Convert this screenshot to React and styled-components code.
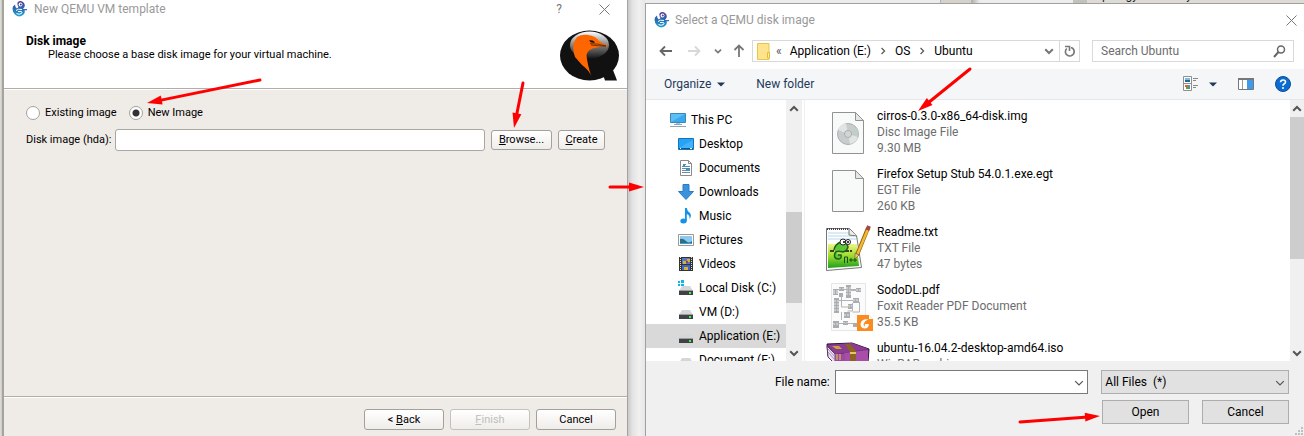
import React from "react";
import styled, { createGlobalStyle, css } from "styled-components";

const Global = createGlobalStyle`
  *, *::before, *::after { box-sizing: border-box; }
  html, body { margin: 0; padding: 0; }
  body { background: #efefef; color: #000; font-family: Roboto, "Open Sans", sans-serif; font-size: 12px; line-height: 16px; }
  button, input, select { font: inherit; color: inherit; margin: 0; }
  svg { display: block; flex: none; }
`;

const Desktop = styled.main`
  position: relative;
  display: grid;
  grid-template-columns: 4px minmax(0, 624fr) 17px minmax(0, 659fr);
  height: 100vh;
  overflow: hidden;
`;
const LeftEdge = styled.div`
  background: linear-gradient(90deg, #dedbd6 0 1px, #cfcdc8 1px 2px, #a5a49e 2px 4px);
`;
const Gap = styled.div`
  background: linear-gradient(90deg, #c9c9c9, #e2e2e2 25%, #f1f1f1 65%, #e6e6e6);
`;

/* ---------- wizard ---------- */
const Wizard = styled.section`
  display: flex;
  flex-direction: column;
  min-width: 0;
  background: #efebe6;
  border-right: 1px solid #a3a3a3;
  font-size: 11px;
`;
const WizardHead = styled.header`
  height: 90px;
  background: #fff;
  border-bottom: 1px solid #fff;
  box-shadow: inset 0 -1px #b0adaa;
`;
const TitleBar = styled.div`
  display: flex;
  align-items: center;
  gap: ${(p) => p.$gap}px;
  height: ${(p) => p.$height}px;
  padding: 0 ${(p) => p.$right}px 0 8px;
  font-size: 12px;
  color: #999;
`;
const Caption = styled.h1`
  flex: 1;
  margin: 0;
  font: inherit;
  white-space: nowrap;
`;
const IconButton = styled.button`
  display: grid;
  place-items: center;
  flex: none;
  width: ${(p) => p.$w || 16}px;
  height: 16px;
  padding: 0;
  border: 0;
  background: none;
  color: ${(p) => p.$color || "#777"};
`;
const HeadBody = styled.div`
  display: flex;
  justify-content: space-between;
  padding: 12px 7px 0 22px;
`;
const HeadTitle = styled.h2`
  margin: 4px 0 0;
  font-size: 12px;
  line-height: 14px;
`;
const HeadText = styled.p`
  margin: 0 0 0 22px;
  line-height: 14px;
`;
const WizardBody = styled.form`
  flex: 1;
  padding: 15px 22px 0;
`;
const RadioRow = styled.div`
  display: flex;
  gap: 12px;
  height: 16px;
`;
const RadioLabel = styled.label`
  display: flex;
  align-items: center;
  gap: 5px;
  white-space: nowrap;
`;
const Radio = styled.input`
  appearance: none;
  width: 14px;
  height: 14px;
  margin: 0;
  border: 1px solid #a5a29f;
  border-radius: 50%;
  background: #fff;
  &:checked { background: radial-gradient(circle, #333 0 3px, #fff 4px); }
`;
const FieldRow = styled.div`
  display: flex;
  align-items: center;
  gap: 6px;
  margin-top: 8px;
`;
const FieldLabel = styled.label`
  width: 83px;
  white-space: nowrap;
`;
const PathInput = styled.input`
  flex: 1;
  min-width: 0;
  height: 22px;
  border: 1px solid #a9a6a3;
  border-radius: 3px;
  background: #fff;
`;
const PushButton = styled.button`
  width: ${(p) => p.$width}px;
  height: ${(p) => p.$height || 20}px;
  padding: 0;
  border: 1px solid #a3a09d;
  border-radius: 3px;
  background: linear-gradient(#fff, #efedea);
  white-space: nowrap;
  &:disabled { color: #c0bdba; border-color: #c4c1be; }
`;
const WizardFoot = styled.footer`
  display: flex;
  justify-content: flex-end;
  gap: 6px;
  height: 40px;
  padding: 12px 11px 0;
  border-top: 1px solid #b0adaa;
  box-shadow: inset 0 1px #fff;
`;

/* ---------- file dialog ---------- */
const RightColumn = styled.div`
  display: flex;
  flex-direction: column;
  min-width: 0;
  min-height: 0;
`;
const BackWindow = styled.div`
  display: flex;
  align-items: flex-end;
  height: 3px;
  overflow: hidden;
  padding-right: 112px;
  justify-content: flex-end;
  background: linear-gradient(90deg, #ececec 0 295px, #b5b3af 295px 296px, #d5d2cc 296px 326px, #b5b3af 326px 327px, #ededed 335px 428px, #c3c1bd 428px 442px, #dedbd6 442px);
`;
const BackTitle = styled.span`
  line-height: 16px;
  color: #222;
`;
const Dialog = styled.section`
  flex: 1;
  display: flex;
  flex-direction: column;
  min-height: 0;
  border: solid #a0a0a0;
  border-width: 1px 0 0 1px;
  background: #fff;
`;
const NavRow = styled.nav`
  display: grid;
  grid-template-columns: 94px minmax(0, 328fr) minmax(0, 214fr);
  align-items: center;
  height: 22px;
  margin-top: 4px;
  padding: 0 10px 0 12px;
`;
const Arrows = styled.div`
  display: flex;
  gap: 8px;
  align-items: center;
`;
const AddressBar = styled.div`
  display: flex;
  align-items: center;
  height: 22px;
  border: 1px solid #d9d9d9;
  padding-left: 4px;
  min-width: 0;
`;
const Crumbs = styled.div`
  flex: 1;
  display: flex;
  align-items: center;
  gap: 8px;
  min-width: 0;
  padding-left: 6px;
  color: #555;
  white-space: nowrap;
`;
const Crumb = styled.a`
  color: #000;
  text-decoration: none;
`;
const RefreshCell = styled.div`
  display: grid;
  place-items: center;
  width: 20px;
  height: 20px;
  border-left: 1px solid #d9d9d9;
`;
const SearchBox = styled.label`
  display: flex;
  align-items: center;
  height: 22px;
  margin-left: 12px;
  padding: 0 7px 0 8px;
  border: 1px solid #d9d9d9;
  min-width: 0;
`;
const SearchInput = styled.input`
  flex: 1;
  min-width: 0;
  padding: 0;
  border: 0;
  outline: 0;
  background: none;
  &::placeholder { color: #6d6d6d; opacity: 1; }
`;
const Toolbar = styled.div`
  display: flex;
  align-items: center;
  height: 31px;
  margin-top: 7px;
  padding: 0 13px 0 18px;
  background: #f5f6f7;
  border-bottom: 1px solid #e6e7e8;
  color: #1e395b;
`;
const ToolButton = styled.button`
  display: flex;
  align-items: center;
  gap: 6px;
  height: 20px;
  padding: 0;
  border: 0;
  background: none;
  white-space: nowrap;
`;
const ToolGroup = styled.div`
  display: flex;
  align-items: center;
  margin-left: ${(p) => p.$left};
  gap: ${(p) => p.$gap || 0}px;
`;
const Panes = styled.div`
  flex: 1;
  display: flex;
  min-height: 0;
`;
const Tree = styled.ul`
  width: 140px;
  margin: 0;
  padding: 8px 0 0;
  list-style: none;
  overflow: hidden;
`;
const TreeItem = styled.li`
  display: flex;
  align-items: center;
  gap: 5px;
  height: 24px;
  padding-left: ${(p) => (p.$root ? 24 : 32)}px;
  white-space: nowrap;
  ${(p) => p.$selected && css`background: #d9d9d9;`}
`;
const ScrollBar = styled.div`
  display: flex;
  flex-direction: column;
  align-items: center;
  width: ${(p) => p.$width}px;
  background: #f0f0f0;
  color: #555;
`;
const ScrollEnd = styled.button`
  display: grid;
  place-items: center;
  width: 100%;
  height: 17px;
  padding: 0;
  border: 0;
  background: none;
`;
const ScrollTrack = styled.div`
  flex: 1;
  width: 100%;
  display: flex;
  flex-direction: column;
`;
const ScrollSpace = styled.div`
  flex: ${(p) => p.$size};
`;
const ScrollThumb = styled.div`
  flex: ${(p) => p.$size};
  background: #cdcdcd;
`;
const FileList = styled.ul`
  flex: 1;
  margin: 0 0 0 2px;
  padding: 8px 0 0 19px;
  border-left: 1px solid #f0f0f0;
  list-style: none;
  overflow: hidden;
`;
const FileItem = styled.li`
  display: flex;
  gap: 5px;
  height: 58px;
`;
const FileIcon = styled.div`
  width: 48px;
  height: 50px;
  flex: none;
`;
const FileText = styled.div`
  display: flex;
  flex-direction: column;
  color: #6d6d6d;
  white-space: nowrap;
`;
const FileName = styled.span`
  color: #000;
`;
const DialogFoot = styled.footer`
  display: flex;
  flex-direction: column;
  gap: 6px;
  height: 75px;
  padding: 9px 15px 0 0;
  background: #f0f0f0;
`;
const FieldsRow = styled.div`
  display: grid;
  grid-template-columns: minmax(0, 189fr) minmax(0, 254fr) 13px minmax(0, 188fr);
  align-items: center;
`;
const ButtonsRow = styled.div`
  display: flex;
  justify-content: flex-end;
`;
const NameLabel = styled.label`
  padding-right: 5px;
  text-align: right;
  white-space: nowrap;
`;
const Combo = styled.div`
  position: relative;
  grid-column: ${(p) => p.$column};
`;
const ComboArrow = styled.span`
  position: absolute;
  right: 4px;
  top: 8px;
  color: #555;
  pointer-events: none;
`;
const NameInput = styled.input`
  display: block;
  width: 100%;
  height: 24px;
  border: 1px solid #7a7a7a;
  background: #fff;
`;
const TypeSelect = styled.select`
  display: block;
  appearance: none;
  width: 100%;
  height: 24px;
  padding: 0 3px;
  border: 1px solid #adadad;
  border-radius: 0;
  background: #e1e1e1;
`;
const FlatButton = styled.button`
  width: 87px;
  height: 24px;
  margin-left: 13px;
  padding: 0;
  border: 1px solid #adadad;
  background: #e1e1e1;
`;
const Grip = styled.svg`
  position: absolute;
  right: 0;
  bottom: 0;
`;
const Annotations = styled.svg`
  position: absolute;
  left: 0;
  top: 0;
  pointer-events: none;
`;

/* ---------- drawings ---------- */
const AppIcon = () => (
  <svg width="16" height="16" viewBox="0 0 16 16" aria-hidden="true">
    <defs>
      <linearGradient id="cham" x1="0" y1="0" x2="0" y2="1">
        <stop offset="0" stopColor="#5a3a93" /><stop offset=".5" stopColor="#2a6db5" /><stop offset="1" stopColor="#21a3d0" />
      </linearGradient>
    </defs>
    <path d="M5.500 1.500Q8-1 11 1Q13.500 3 12.500 6L11 8H15V9.200H12.500Q13.500 12 11 14Q7 17 3 13.500Q-.5 10 1 5.500L3 3.500L3.500 6L5 7.500L6.500 6Q5 4 5.500 1.500Z" fill="url(#cham)" />
    <circle cx="8.500" cy="3.500" r="1.900" fill="#fff" /><circle cx="8.800" cy="3.500" r="1" fill="#4a4593" />
    <path d="M4 9.500Q6 7.500 10 8.500M4.500 12.500Q7 14 9.500 12.500Q11 11 9 10.500H6" fill="none" stroke="#fff" />
  </svg>
);
const Cross = () => (
  <svg width="11" height="11" viewBox="0 0 11 11"><path d="M.5.5l10 10M10.5.5l-10 10" stroke="currentColor" fill="none" /></svg>
);
const Chevron = ({ dir = "down", size = 10, weight = 1.5 }) => {
  const rot = { down: 0, up: 180, right: -90 }[dir];
  return (
    <svg width={size} height={size} viewBox="0 0 10 10">
      <path d="M1.2 3.2L5 7l3.800-3.800" transform={`rotate(${rot} 5 5)`} fill="none" stroke="currentColor" strokeWidth={weight} />
    </svg>
  );
};
const Triangle = () => (
  <svg width="8" height="5" viewBox="0 0 8 5"><path d="M0 .5h8L4 4.500z" fill="#1e395b" /></svg>
);
const Arrow = ({ rot = 0, color }) => (
  <svg width="14" height="14" viewBox="0 0 14 14">
    <path d="M13 7H2M6 2.500L1.500 7L6 11.500" transform={`rotate(${rot} 7 7)`} fill="none" stroke={color} strokeWidth="1.800" />
  </svg>
);
const QemuLogo = () => (
  <svg width="60" height="52" viewBox="0 0 60 52" role="img" aria-label="QEMU">
    <defs>
      <linearGradient id="shine" x1="0" y1="0" x2="0" y2="1">
        <stop offset="0" stopColor="#fff" /><stop offset=".55" stopColor="#777" /><stop offset="1" stopColor="#161616" />
      </linearGradient>
    </defs>
    <ellipse cx="29.500" cy="25.500" rx="29.500" ry="25" fill="#111" />
    <path d="M42 42l11-2 4 10.500H45z" fill="#111" />
    <ellipse cx="29.500" cy="15" rx="19.500" ry="13.500" fill="url(#shine)" />
    <path d="M17 7Q22 4 28 5Q36 6 39 11L47 15.500V17Q42 16 37 17.500Q27 19 26.500 25Q27 33 31.500 47Q30 41 22 35L15 27Q12 19 14 12Z" fill="#ff6600" />
    <path d="M29 10.500q4-1 6 2q-4 1-6-2z" fill="#111" /><path d="M30 13.600Q38 13.500 46 16M31 15q8 1 15 1.200" fill="none" stroke="#111" strokeWidth=".6" />
  </svg>
);
const FolderIcon = () => (
  <svg width="13" height="17" viewBox="0 0 13 17"><path d="M.5.5H12v16H.5z" fill="#ffe38d" stroke="#e9c54d" /><path d="M10.500 9.500H12.500V15H10.500z" fill="#ffe9a6" stroke="#e9b93a" /></svg>
);
const Refresh = () => (
  <svg width="12" height="12" viewBox="0 0 12 12"><path d="M2.800 3.500Q.5 6 2 9Q4 11.500 7 10.800Q10.500 9.500 10.200 6Q9.500 3 7 2.500" fill="none" stroke="#777" strokeWidth="1.600" /><path d="M1 1.500H5.500V6" fill="none" stroke="#777" strokeWidth="1.600" /></svg>
);
const Search = () => (
  <svg width="13" height="13" viewBox="0 0 13 13"><circle cx="8" cy="4.500" r="3.500" fill="none" stroke="#666" strokeWidth="1.500" /><path d="M5.500 7L1 12" stroke="#666" strokeWidth="2" /></svg>
);
const ViewIcon = () => (
  <svg width="16" height="16" viewBox="0 0 16 16">
    <path d="M.5.5h8v7h-8zM.5 7.500h8v7h-8z" fill="#fff" stroke="#8f8f8f" />
    <path d="M2 2h5v2H2z" fill="#7db9ec" /><path d="M2 4h5v2H2z" fill="#216b8e" />
    <path d="M2 9h3v2H2z" fill="#e25c35" /><path d="M5 9h2v2H5z" fill="#4e8ee0" /><path d="M3 11h4v2H3z" fill="#54a344" />
    <path d="M10 2.500h5M10 4.500h3M10 9.500h5M10 11.500h3" stroke="#888" />
  </svg>
);
const PaneIcon = () => (
  <svg width="16" height="12" viewBox="0 0 16 12"><path d="M.5.5h15v11H.5z" fill="#fff" stroke="#777" /><path d="M0 0h16v2H0z" fill="#777" /><path d="M4.500 2v9" stroke="#999" /><path d="M9 2h6v9H9z" fill="#3f9be8" /></svg>
);
const HelpIcon = () => (
  <svg width="16" height="16" viewBox="0 0 16 16"><circle cx="8" cy="8" r="7.500" fill="#0a6cd0" stroke="#0b4f96" /><path d="M5.500 6.300Q5.700 4 8 4Q10.500 4 10.500 6Q10.500 7.200 9 8Q8 8.600 8 9.700" fill="none" stroke="#fff" strokeWidth="1.600" /><circle cx="8" cy="12" r="1" fill="#fff" /></svg>
);

const Drive = ({ windows }) => (
  <svg width="16" height="16" viewBox="0 0 16 16">
    <path d="M4 6h8l3 5H1z" fill="#d4d6d7" /><path d="M1 11h14v4H1z" fill="#3f4345" /><path d="M1 10h14v1H1z" fill="#9b9d9e" /><path d="M11 12h2v2h-2z" fill="#43f04c" />
    {windows && <path d="M0 1h2v2H0zM3 0h3v3H3zM0 4h2v2H0zM3 4h3v2H3z" fill="#12b5ea" />}
  </svg>
);
const treeIcons = {
  pc: <svg width="16" height="16" viewBox="0 0 16 16"><path d="M.5 1.500h15v9H.5z" fill="#5cc0f7" stroke="#3b87b5" /><path d="M1 10L15 2v8z" fill="#38a9ee" /><path d="M6 11h4v1H6z" fill="#a9c3d4" /><path d="M4 12.500h8M0 14.500h16" stroke="#8ca5b5" /></svg>,
  desktop: <svg width="16" height="16" viewBox="0 0 16 16"><path d="M.5 2.500h15v11H.5z" fill="#27a3f5" stroke="#1573bc" /><path d="M1 12L15 4v8z" fill="#45b1f8" /><path d="M1 12.500h14" stroke="#0b568f" /><path d="M2 12.500h1M12 12.500h2" stroke="#fff" /></svg>,
  documents: <svg width="16" height="16" viewBox="0 0 16 16"><path d="M2.500.5h8l3 3v12h-11z" fill="#fff" stroke="#8a8a8a" /><path d="M10.500.5v3h3" fill="none" stroke="#8a8a8a" /><path d="M5 4.500h3M4 6.500h8M4 8.500h8M4 10.500h8M4 12.500h8" stroke="#6b8ba3" /><path d="M5 4h2v3H5zM8 8h4v2H8z" fill="#2f93cf" /></svg>,
  downloads: <svg width="16" height="16" viewBox="0 0 16 16"><path d="M5 .5h6v7h4.500L8 15.500.5 7.500H5z" fill="#3a92dd" stroke="#2c7cc3" /></svg>,
  music: <svg width="16" height="16" viewBox="0 0 16 16"><ellipse cx="5.500" cy="13" rx="3.200" ry="2.500" fill="#1193ea" /><path d="M7 0h1.800Q9 3 12 5Q14 8 11.500 11Q12 7 8.800 6V13H7z" fill="#1193ea" /></svg>,
  pictures: <svg width="16" height="16" viewBox="0 0 16 16"><path d="M.5 2.500h15v11H.5z" fill="#fff" stroke="#999" /><path d="M2 4h12v8H2z" fill="#8cc9f2" /><path d="M2 7q3-1 6 2t6 0v3H2z" fill="#2e6f7c" /><path d="M2 11h12v1H2z" fill="#3c9ad9" /></svg>,
  videos: <svg width="16" height="16" viewBox="0 0 16 16"><path d="M1 1h14v14H1z" fill="#333" /><path d="M4 2h8v6H4z" fill="#5577c9" /><path d="M4 9h8v5H4z" fill="#3c66c9" /><path d="M5 5h3v3H5zM9 3h3v3H9zM6 11h4v3H6z" fill="#d9b32c" /><path d="M8 5h2v2H8z" fill="#a63a3a" /><path d="M2.500 1v14M13.500 1v14" stroke="#ddd" strokeDasharray="1 1" /></svg>,
  system: <Drive windows />,
  drive: <Drive />,
};
const treeRows = [
  ["This PC", "pc"], ["Desktop", "desktop"], ["Documents", "documents"], ["Downloads", "downloads"], ["Music", "music"],
  ["Pictures", "pictures"], ["Videos", "videos"], ["Local Disk (C:)", "system"], ["VM (D:)", "drive"], ["Application (E:)", "drive"], ["Document (F:)", "drive"],
];

const Sheet = () => (
  <>
    <path d="M8.500 4.500h23l8 8v33h-31z" fill="#f8f9f9" stroke="#929292" />
    <path d="M31.500 4.500v8h8z" fill="#e4e7e7" stroke="#929292" />
  </>
);
const fileIcons = {
  disc: <svg width="48" height="50" viewBox="0 0 48 50"><Sheet /><circle cx="24" cy="26" r="10.500" fill="#c9cccc" stroke="#abafaf" /><path d="M24 26L14 22Q16 16 22 15.500zM24 26l10 3q-2 6-8 7z" fill="#e0e4e2" /><path d="M24 26L33 20Q35 24 34.500 28z" fill="#bfcfc8" /><circle cx="24" cy="26" r="3.500" fill="#d9dcdc" stroke="#a7abab" /><circle cx="24" cy="26" r="1.200" fill="#fff" stroke="#aaa" strokeWidth=".6" /></svg>,
  sheet: <svg width="48" height="50" viewBox="0 0 48 50"><Sheet /></svg>,
  notepad: (
    <svg width="48" height="50" viewBox="0 0 48 50">
      <defs><linearGradient id="leaf" x1="0" y1="0" x2="0" y2="1"><stop offset="0" stopColor="#eef58a" /><stop offset=".5" stopColor="#9bdc2c" /><stop offset="1" stopColor="#1f9f1f" /></linearGradient></defs>
      <path d="M2.500 4.500h23l7 7 5 32-35 3z" fill="#fff" stroke="#777" />
      <path d="M3 5h22" stroke="#444" strokeWidth="2" strokeDasharray="1 1" />
      <path d="M4 9h24M4 12h27M4 15h28" stroke="#b7d8ee" />
      <path d="M4 20h29l2 22-31 2z" fill="url(#leaf)" />
      <path d="M25 5v6l8 1" fill="#ececec" stroke="#777" />
      <path d="M6 27h22" stroke="#4a3d17" strokeWidth="2" strokeDasharray="4 1" />
      <path d="M10 26q1-6 7-8q6 0 7 5q-1 4-5 5q-6-2-8 1q-2 6 4 6q3-1 2-4h-3" fill="#5ec43a" stroke="#1e5f1a" strokeWidth="1.500" />
      <circle cx="19" cy="18" r="3" fill="#fff" stroke="#222" /><circle cx="24" cy="18" r="2.500" fill="#fff" stroke="#222" /><circle cx="20" cy="18" r="1" /><circle cx="24" cy="18" r="1" />
      <path d="M20.500 39v-6h3v6M25 36h4M27 34v4M29 36h4M31 34v4" fill="none" stroke="#164f16" />
      <path d="M44 4L33 31" stroke="#8e5c13" strokeWidth="4" /><path d="M43.500 6L33.500 30" stroke="#f5b92d" strokeWidth="2.500" /><path d="M45 2L43.500 6" stroke="#a34747" strokeWidth="4" /><path d="M35 31l-4 4 0-6z" fill="#e7c48b" stroke="#604018" strokeWidth=".5" />
    </svg>
  ),
  pdf: (
    <svg width="52" height="50" viewBox="0 0 52 50">
      <path d="M7.500 1.500h34v47h-34z" fill="#fbfbfb" stroke="#e6e6e6" />
      <g fill="#a9adb0">
        <path d="M9 7h5v6H9zM15 5h5v4h-5zM22 3h5v13h-5zM32 6h5v4h-5zM10 16h5v15h-5zM15 11h4v4h-4zM29 16h6v5h-6zM24 22h4v5h-4zM20 30h6v6h-6zM9 39h6v7H9zM19 39h5v4h-5zM29 41h5v4h-5z" />
      </g>
      <path d="M9 9h5M9 11h5M15 7h5M22 6h5M22 9h5M22 12h5M32 8h5M10 19h5M10 22h5M10 25h5M10 28h5M29 18h6M24 24h4M20 33h6M9 42h6M19 41h5" stroke="#e9ebec" strokeDasharray="2 1" />
      <path d="M14 7.500h18M17.500 13v12h10M15 18.500h14M27 8.500h5M28.500 21v8h-5M14 41.500h15M35.500 20v10h-7M17.500 30v8" fill="none" stroke="#b3b3b3" />
      <path d="M33 33h12l4 4v12H33z" fill="#fa8b20" /><path d="M45 33v4h4z" fill="#fff" /><path d="M44.500 37.500q-7-1-8 4.500q0 4 4 4.500q4 0 4.500-4.500h-4q-1 2 .5 2.500q-2 0-2-2q1-4 5-5z" fill="#fff" />
    </svg>
  ),
  rar: (
    <svg width="48" height="50" viewBox="0 0 48 50">
      <path d="M3 4L28 3 45 9 44 22 20 25 4 16z" fill="#74307f" stroke="#32153b" /><path d="M20 13l24-3v12H20z" fill="#a84da8" />
      <path d="M3 6l8 8v10l-7-7z" fill="#e9e4f0" stroke="#5d3667" /><path d="M4 9l7 8M4 12l7 8" stroke="#a98cb5" /><path d="M4 5l24-2 16 6-33 5z" fill="#8c3c91" /><path d="M11 14h10v10H11z" fill="#9c4a9f" /><path d="M21 4h5l6 7v13h-6V12z" fill="#8d6324" /><path d="M26 13h6" stroke="#e4c56d" strokeWidth="2" /><path d="M13 14v6M16 14v6" stroke="#ebd04b" /><path d="M8 6h7l3 3h-6z" fill="#c9a33c" />
    </svg>
  ),
};
const files = [
  ["cirros-0.3.0-x86_64-disk.img", "Disc Image File", "9.30 MB", "disc"],
  ["Firefox Setup Stub 54.0.1.exe.egt", "EGT File", "260 KB", "sheet"],
  ["Readme.txt", "TXT File", "47 bytes", "notepad"],
  ["SodoDL.pdf", "Foxit Reader PDF Document", "35.5 KB", "pdf"],
  ["ubuntu-16.04.2-desktop-amd64.iso", "WinRAR archive", "1.44 GB", "rar"],
];

const RedArrow = ({ from, to }) => {
  const [x1, y1] = from;
  const [x2, y2] = to;
  const len = Math.hypot(x2 - x1, y2 - y1);
  const angle = (Math.atan2(y2 - y1, x2 - x1) * 180) / Math.PI;
  return (
    <g transform={`translate(${x1} ${y1}) rotate(${angle})`} fill="#f00">
      <path d={`M0 0H${len - 12}`} stroke="#f00" strokeWidth="3" strokeLinecap="round" />
      <path d={`M${len} 0l-15-4.500v9z`} />
    </g>
  );
};

const Scroller = ({ width, parts }) => (
  <ScrollBar $width={width}>
    <ScrollEnd type="button" aria-label="Scroll up"><Chevron dir="up" weight={2} /></ScrollEnd>
    <ScrollTrack>
      <ScrollSpace $size={parts[0]} /><ScrollThumb $size={parts[1]} /><ScrollSpace $size={parts[2]} />
    </ScrollTrack>
    <ScrollEnd type="button" aria-label="Scroll down"><Chevron weight={2} /></ScrollEnd>
  </ScrollBar>
);

export default function App() {
  return (
    <>
      <Global />
      <Desktop>
        <LeftEdge />
        <Wizard>
          <WizardHead>
            <TitleBar $height={18} $gap={6} $right={1}>
              <AppIcon />
              <Caption>New QEMU VM template</Caption>
              <IconButton type="button" aria-label="Help" $w={34}>?</IconButton>
              <IconButton type="button" aria-label="Close" $w={44}><Cross /></IconButton>
            </TitleBar>
            <HeadBody>
              <div>
                <HeadTitle>Disk image</HeadTitle>
                <HeadText>Please choose a base disk image for your virtual machine.</HeadText>
              </div>
              <QemuLogo />
            </HeadBody>
          </WizardHead>
          <WizardBody>
            <RadioRow>
              <RadioLabel><Radio type="radio" name="source" />Existing image</RadioLabel>
              <RadioLabel><Radio type="radio" name="source" defaultChecked />New Image</RadioLabel>
            </RadioRow>
            <FieldRow>
              <FieldLabel htmlFor="hda">Disk image (hda):</FieldLabel>
              <PathInput id="hda" type="text" />
              <PushButton type="button" $width={61}><u>B</u>rowse...</PushButton>
              <PushButton type="button" $width={47}><u>C</u>reate</PushButton>
            </FieldRow>
          </WizardBody>
          <WizardFoot>
            <PushButton type="button" $width={80} $height={21}>&lt; <u>B</u>ack</PushButton>
            <PushButton type="button" $width={80} $height={21} disabled><u>F</u>inish</PushButton>
            <PushButton type="button" $width={80} $height={21}>Cancel</PushButton>
          </WizardFoot>
        </Wizard>
        <Gap />
        <RightColumn>
          <BackWindow><BackTitle>Topology Summary</BackTitle></BackWindow>
          <Dialog>
            <TitleBar $height={32} $gap={5} $right={7}>
              <AppIcon />
              <Caption>Select a QEMU disk image</Caption>
              <IconButton type="button" aria-label="Close" $w={11}><Cross /></IconButton>
            </TitleBar>
            <NavRow aria-label="Location">
              <Arrows>
                <IconButton type="button" aria-label="Back"><Arrow color="#666" /></IconButton>
                <IconButton type="button" aria-label="Forward" $w={24}><Arrow rot={180} color="#d8d8d8" /></IconButton>
                <IconButton type="button" aria-label="Recent" $w={8}><Chevron size={8} weight={2} /></IconButton>
                <IconButton type="button" aria-label="Up" $w={18}><Arrow rot={90} color="#777" /></IconButton>
              </Arrows>
              <AddressBar>
                <FolderIcon />
                <Crumbs>
                  <span>«</span>
                  <Crumb href="#drive">Application (E:)</Crumb>
                  <Chevron dir="right" size={8} />
                  <Crumb href="#os">OS</Crumb>
                  <Chevron dir="right" size={8} />
                  <Crumb href="#ubuntu">Ubuntu</Crumb>
                </Crumbs>
                <IconButton type="button" aria-label="Previous locations" $w={20}><Chevron weight={2} /></IconButton>
                <RefreshCell><IconButton type="button" aria-label="Refresh"><Refresh /></IconButton></RefreshCell>
              </AddressBar>
              <SearchBox>
                <SearchInput type="text" placeholder="Search Ubuntu" aria-label="Search Ubuntu" />
                <Search />
              </SearchBox>
            </NavRow>
            <Toolbar>
              <ToolButton type="button">Organize<Triangle /></ToolButton>
              <ToolGroup $left="31px"><ToolButton type="button">New folder</ToolButton></ToolGroup>
              <ToolGroup $left="auto" $gap={21}>
                <ToolGroup $left="0" $gap={10}>
                  <ToolButton type="button" aria-label="View"><ViewIcon /></ToolButton>
                  <ToolButton type="button" aria-label="More views"><Triangle /></ToolButton>
                </ToolGroup>
                <ToolButton type="button" aria-label="Preview pane"><PaneIcon /></ToolButton>
                <ToolButton type="button" aria-label="Get help"><HelpIcon /></ToolButton>
              </ToolGroup>
            </Toolbar>
            <Panes>
              <Tree>
                {treeRows.map(([name, icon], i) => (
                  <TreeItem key={name} $root={i === 0} $selected={name === "Application (E:)"}>{treeIcons[icon]}{name}</TreeItem>
                ))}
              </Tree>
              <Scroller width={16} parts={[95, 91, 41]} />
              <FileList>
                {files.map(([name, kind, size, icon]) => (
                  <FileItem key={name}>
                    <FileIcon>{fileIcons[icon]}</FileIcon>
                    <FileText><FileName>{name}</FileName><span>{kind}</span><span>{size}</span></FileText>
                  </FileItem>
                ))}
              </FileList>
              <Scroller width={14} parts={[0, 142, 85]} />
            </Panes>
            <DialogFoot>
              <FieldsRow>
                <NameLabel htmlFor="fname">File name:</NameLabel>
                <Combo $column={2}>
                  <NameInput id="fname" type="text" />
                  <ComboArrow><Chevron weight={1.2} /></ComboArrow>
                </Combo>
                <Combo $column={4}>
                  <TypeSelect aria-label="File type"><option>All Files{"\u00a0\u00a0"}(*)</option></TypeSelect>
                  <ComboArrow><Chevron weight={1.2} /></ComboArrow>
                </Combo>
              </FieldsRow>
              <ButtonsRow>
                <FlatButton type="button">Open</FlatButton>
                <FlatButton type="button">Cancel</FlatButton>
              </ButtonsRow>
            </DialogFoot>
          </Dialog>
        </RightColumn>
        <Grip width="9" height="9" viewBox="0 0 9 9" aria-hidden="true">
          <path d="M6 0h2v2H6zM3 3h2v2H3zM6 3h2v2H6zM0 6h2v2H0zM3 6h2v2H3zM6 6h2v2H6z" fill="#bfbfbf" />
        </Grip>
        <Annotations width="1304" height="436" viewBox="0 0 1304 436" aria-hidden="true">
          <RedArrow from={[260, 80]} to={[147, 103]} />
          <RedArrow from={[523, 83]} to={[514, 128]} />
          <RedArrow from={[610, 187]} to={[644, 187]} />
          <RedArrow from={[970, 69]} to={[918, 111]} />
          <RedArrow from={[1020, 422]} to={[1100, 416]} />
        </Annotations>
      </Desktop>
    </>
  );
}
